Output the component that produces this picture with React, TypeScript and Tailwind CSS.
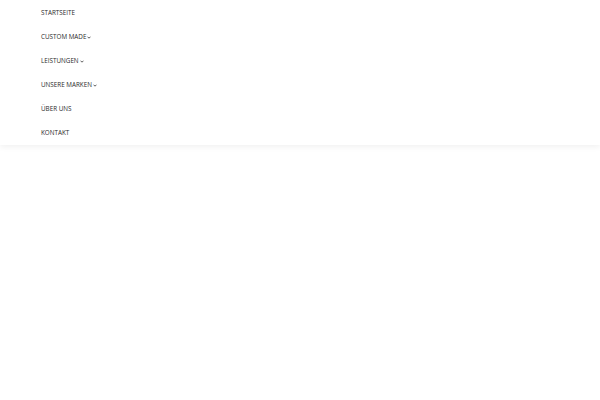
const items = [
  { label: 'STARTSEITE', sub: false },
  { label: 'CUSTOM MADE', sub: true },
  { label: 'LEISTUNGEN', sub: true },
  { label: 'UNSERE MARKEN', sub: true },
  { label: 'ÜBER UNS', sub: false },
  { label: 'KONTAKT', sub: false },
]

function Caret() {
  return (
    <svg width="4" height="3" viewBox="0 0 4 3" className="ml-[1px] mt-[1px]">
      <path d="M0.5 0.7 L2 2.2 L3.5 0.7" fill="none" stroke="#333" strokeWidth="0.8" />
    </svg>
  )
}

export default function App() {
  return (
    <div className="w-[600px] h-[400px] bg-white" style={{ fontFamily: '"Open Sans", sans-serif' }}>
      <header className="bg-white shadow-[0_2px_6px_rgba(0,0,0,0.06)] pt-[1px]">
        <nav className="flex flex-col pl-[41px]">
          {items.map(it => (
            <a key={it.label} href="#" className="h-[24px] flex items-center text-[6.3px] text-[#2a2a2a] leading-none">
              {it.label}
              {it.sub && <Caret />}
            </a>
          ))}
        </nav>
      </header>
    </div>
  )
}
